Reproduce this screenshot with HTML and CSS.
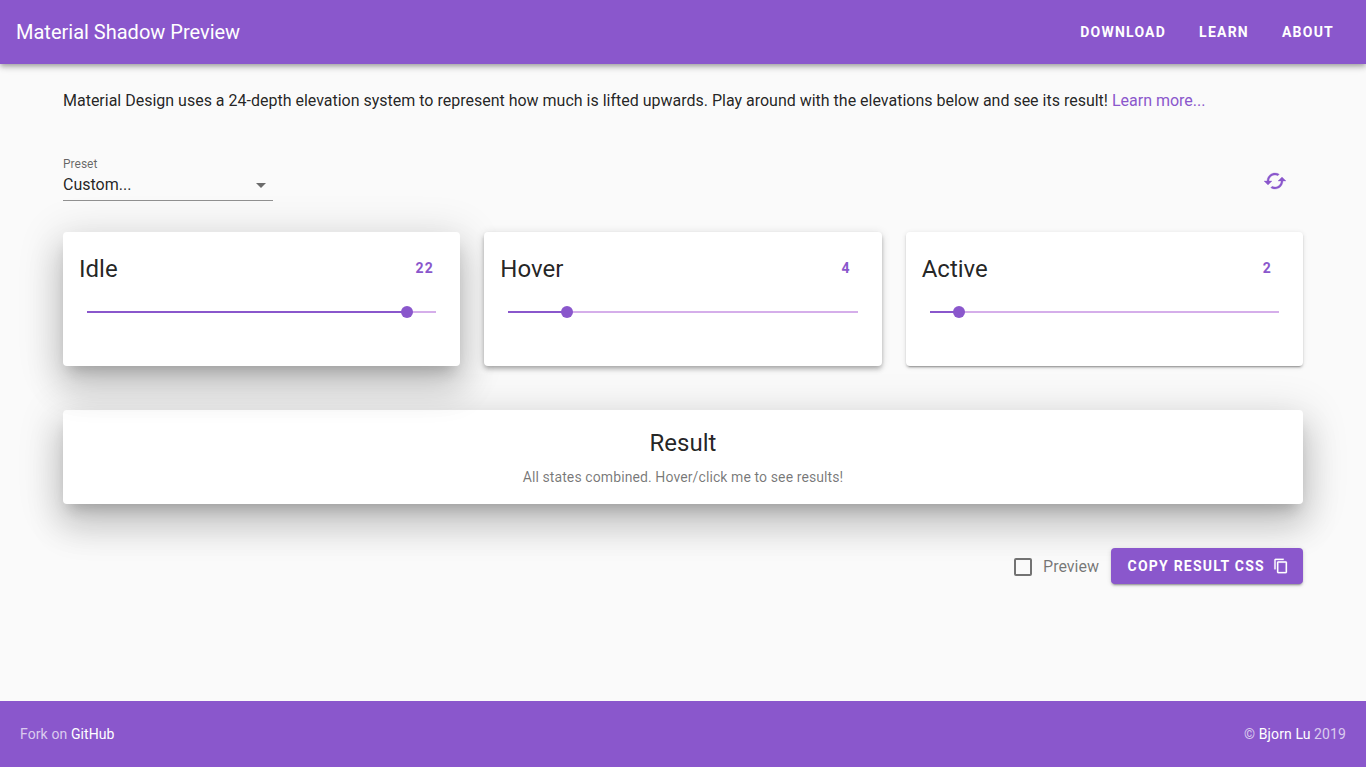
FILE: index.html
```html
<!DOCTYPE html>
<html lang="en">
<head>
<meta charset="utf-8">
<title>Material Shadow Preview</title>
<link rel="stylesheet" href="styles.css">
</head>
<body>
<header class="app-bar">
  <div class="title">Material Shadow Preview</div>
  <nav class="nav"><a>Download</a><a>Learn</a><a>About</a></nav>
</header>
<main class="container">
  <p class="intro">Material Design uses a 24-depth elevation system to represent how much is lifted upwards. Play around with the elevations below and see its result! <a>Learn more...</a></p>
  <div class="toolbar">
    <div class="select">
      <div class="select-label">Preset</div>
      <div class="select-value"><span>Custom...</span><svg width="10" height="5" viewBox="0 0 10 5"><path d="M0 0h10L5 5z" fill="#6b6b6b"/></svg></div>
    </div>
    <button class="icon-button" aria-label="Reset"><svg width="24" height="24" viewBox="0 0 24 24"><path d="M19 8l-4 4h3c0 3.310-2.690 6-6 6-1.010 0-1.970-.25-2.800-.7l-1.460 1.460C8.970 19.540 10.430 20 12 20c4.420 0 8-3.580 8-8h3l-4-4zM6 12c0-3.310 2.690-6 6-6 1.010 0 1.970.25 2.800.7l1.460-1.460C15.030 4.460 13.570 4 12 4c-4.420 0-8 3.580-8 8H1l4 4 4-4H6z" fill="currentColor" stroke="currentColor" stroke-width=".3"/></svg></button>
  </div>
  <div class="cards">
    <section class="card z22"><div class="card-head"><h2>Idle</h2><span>22</span></div><div class="slider"><div class="fill" style="width:91.67%"></div></div></section>
    <section class="card z4"><div class="card-head"><h2>Hover</h2><span>4</span></div><div class="slider"><div class="fill" style="width:16.67%"></div></div></section>
    <section class="card z2"><div class="card-head"><h2>Active</h2><span>2</span></div><div class="slider"><div class="fill" style="width:8.33%"></div></div></section>
  </div>
  <section class="result z22"><h2>Result</h2><p>All states combined. Hover/click me to see results!</p></section>
  <div class="actions">
    <label class="check"><span class="box"></span>Preview</label>
    <button class="copy">Copy result CSS<svg width="16" height="16" viewBox="0 0 24 24"><path d="M16 1H4c-1.100 0-2 .9-2 2v14h2V3h12V1zm3 4H8c-1.100 0-2 .9-2 2v14c0 1.100.9 2 2 2h11c1.100 0 2-.9 2-2V7c0-1.100-.9-2-2-2zm0 16H8V7h11v14z" fill="currentColor" stroke="currentColor" stroke-width=".4"/></svg></button>
  </div>
</main>
<footer class="footer"><div>Fork on <a>GitHub</a></div><div>© <a>Bjorn Lu</a> 2019</div></footer>
</body>
</html>
```
FILE: styles.css
```css
* { box-sizing: border-box; }
body {
  margin: 0;
  height: 767px;
  display: flex;
  flex-direction: column;
  overflow: hidden;
  background: #fafafa;
  color: rgba(0, 0, 0, .87);
  font-family: Roboto, sans-serif;
}
h2, p { margin: 0; font-weight: 400; }
button { border: 0; padding: 0; background: none; font-family: inherit; }
.app-bar {
  flex: none;
  height: 64px;
  padding: 0 24px 0 16px;
  display: flex;
  align-items: center;
  justify-content: space-between;
  background: #8a57cc;
  color: #fff;
  z-index: 2;
  box-shadow: 0 2px 4px -1px rgba(0,0,0,.2), 0 4px 5px rgba(0,0,0,.14), 0 1px 10px rgba(0,0,0,.12);
}
.title { font-size: 20px; }
.nav { display: flex; gap: 17px; }
.nav a {
  padding: 0 8px;
  font-size: 14px;
  font-weight: 700;
  letter-spacing: 1.23px;
  text-transform: uppercase;
}
.container { flex: 1; padding: 25px 63px 0; }
.intro { font-size: 16px; line-height: 24px; letter-spacing: -.005px; }
.intro a { color: #8a57cc; }
.toolbar {
  height: 56px;
  margin-top: 32px;
  display: flex;
  justify-content: space-between;
}
.select { width: 210px; height: 56px; padding-top: 12px; border-bottom: 1px solid rgba(0,0,0,.42); }
.select-label { font-size: 12px; line-height: 14px; color: rgba(0,0,0,.6); }
.select-value {
  height: 28px;
  padding-right: 7px;
  display: flex;
  align-items: center;
  justify-content: space-between;
  font-size: 16px;
}
.select-value span { padding-bottom: 2px; }
.icon-button { width: 24px; height: 24px; margin: 24px 16px 0 0; color: #8a57cc; }
.cards { margin-top: 31px; display: grid; grid-template-columns: repeat(3, 1fr); gap: 24px; }
.card { height: 134px; padding: 16px; background: #fff; border-radius: 4px; }
.card-head { display: flex; justify-content: space-between; align-items: center; height: 40px; padding-right: 10px; }
.card h2 { padding-top: 2px; font-size: 24px; line-height: 32px; }
.card-head span { min-width: 19px; text-align: center; font-size: 14px; font-weight: 700; letter-spacing: 1.25px; color: #8a57cc; }
.slider { height: 2px; margin: 23px 8px 0; background: #d5aeea; }
.fill { position: relative; height: 2px; background: #8a57cc; }
.fill::after {
  content: "";
  position: absolute;
  right: -6px;
  top: -5px;
  width: 12px;
  height: 12px;
  border-radius: 50%;
  background: #8a57cc;
}
.z22 { box-shadow: 0 10px 14px -6px rgba(0,0,0,.2), 0 22px 35px 3px rgba(0,0,0,.14), 0 8px 42px 7px rgba(0,0,0,.12); }
.z4 { box-shadow: 0 2px 4px -1px rgba(0,0,0,.2), 0 4px 5px rgba(0,0,0,.14), 0 1px 10px rgba(0,0,0,.12); }
.z2 { box-shadow: 0 3px 1px -2px rgba(0,0,0,.2), 0 2px 2px rgba(0,0,0,.14), 0 1px 5px rgba(0,0,0,.12); }
.result { height: 94px; margin-top: 44px; padding-top: 17px; background: #fff; border-radius: 4px; text-align: center; }
.result h2 { font-size: 24px; line-height: 32px; }
.result p { margin-top: 8px; font-size: 14px; line-height: 20px; letter-spacing: .1px; color: rgba(0,0,0,.54); }
.actions { margin-top: 44px; display: flex; justify-content: flex-end; align-items: center; }
.check { display: flex; align-items: center; gap: 11px; color: rgba(0,0,0,.54); font-size: 16px; }
.box { width: 18px; height: 18px; margin-top: 1px; border: 2px solid rgba(0,0,0,.54); border-radius: 2px; }
.copy {
  width: 192px;
  height: 36px;
  margin-left: 12px;
  padding-left: 16.5px;
  display: flex;
  align-items: center;
  gap: 8.5px;
  border-radius: 4px;
  background: #8a57cc;
  color: #fff;
  font-size: 14px;
  font-weight: 700;
  letter-spacing: 1.23px;
  text-transform: uppercase;
  box-shadow: 0 3px 1px -2px rgba(0,0,0,.2), 0 2px 2px rgba(0,0,0,.14), 0 1px 5px rgba(0,0,0,.12);
}
.footer {
  flex: none;
  height: 66px;
  padding: 0 20px;
  display: flex;
  align-items: center;
  justify-content: space-between;
  background: #8a57cc;
  color: rgba(255,255,255,.7);
  font-size: 14px;
  letter-spacing: .1px;
}
.footer a { color: #fff; }
```
